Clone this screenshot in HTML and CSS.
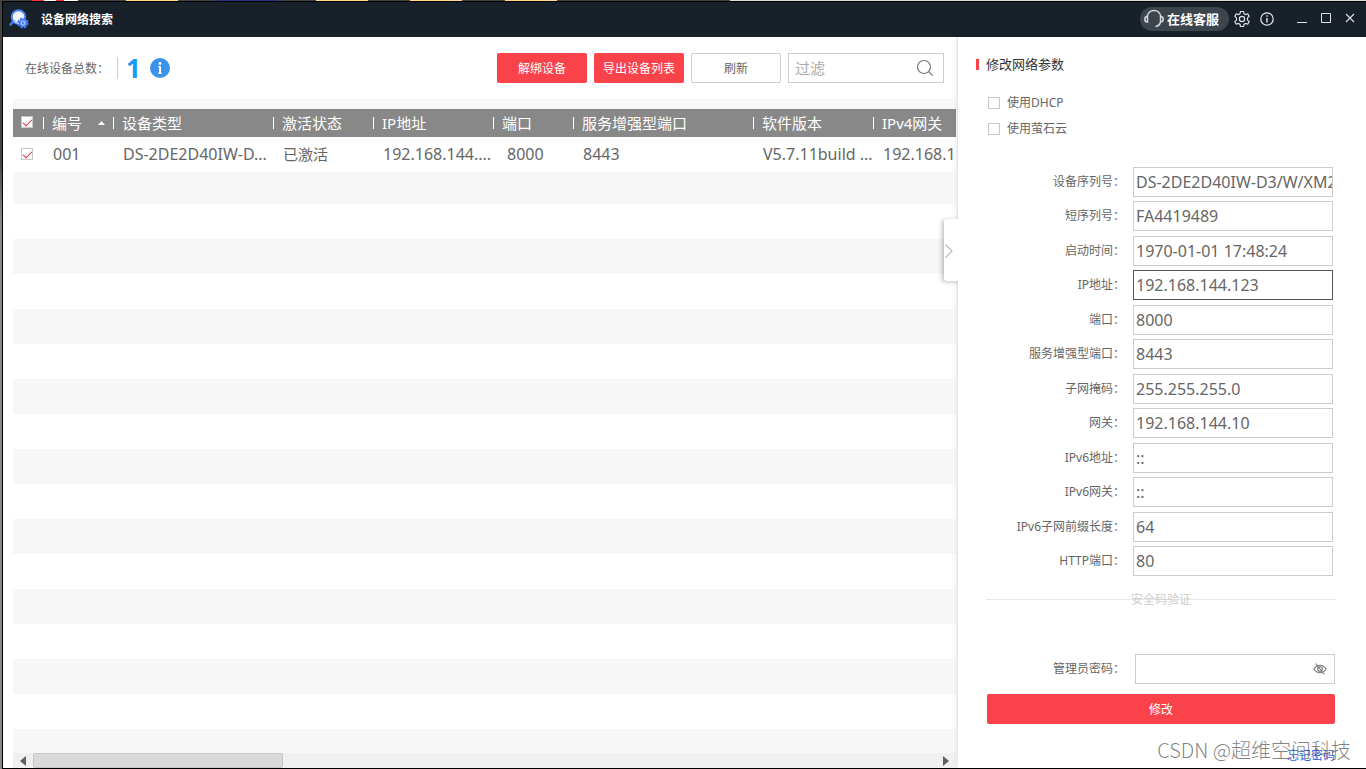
FILE: index.html
```html
<!DOCTYPE html>
<html lang="zh-CN">
<head>
<meta charset="utf-8">
<title>设备网络搜索</title>
<link rel="stylesheet" href="styles.css">
</head>
<body>
<div class="window">
  <header class="titlebar">
    <svg class="logo" width="20" height="20" viewBox="0 0 20 20">
      <path d="M4.500 12.500 1.500 15.500" stroke="#3f74e8" stroke-width="2.500" stroke-linecap="round"/>
      <circle cx="9.500" cy="8" r="6.800" fill="#f2f6ff" stroke="#4a80f0" stroke-width="2"/>
      <path d="M10 14a6 6 0 0 1-5-3" stroke="#b4ccff" stroke-width="2" fill="none"/>
      <circle cx="14" cy="14" r="4.600" fill="none" stroke="#3f74e8" stroke-width="2" stroke-dasharray="2.400 1.200"/>
      <circle cx="14" cy="14" r="4.200" fill="#4c82f2"/>
      <circle cx="14" cy="14" r="2" fill="#4c82f2" stroke="#b9d0ff" stroke-width="1"/>
    </svg>
    <h1 class="app-title">设备网络搜索</h1>
    <button class="service" type="button">
      <svg width="20" height="20" viewBox="0 0 20 20" fill="none" stroke="#d5d8da" stroke-width="1.500">
        <path d="M3 7.500C4 4 6.500 1.500 10 1.500S16 4 17 7.500"/>
        <path d="M3.500 7.500C1.500 7.500.8 8.800.8 10.200s.7 2.800 2.700 2.800zM16.500 7.500c2 0 2.700 1.300 2.700 2.700S18.500 13 16.500 13zM16.500 13c-.5 2.500-2 4-5 4.500"/>
      </svg>
      <span>在线客服</span>
    </button>
    <button class="tool" type="button" aria-label="设置">
      <svg width="18" height="18" viewBox="0 0 18 18" fill="none" stroke="#dfe2e4" stroke-width="1.200" stroke-linejoin="round">
        <path d="M7.500 1.500h3l.5 2.200 1.500.9 2.200-.8 1.500 2.600-1.700 1.500v2.200l1.700 1.500-1.500 2.600-2.200-.8-1.500.9-.5 2.200h-3L7 14.300l-1.500-.9-2.200.8-1.500-2.600 1.700-1.500V7.900L1.800 6.400l1.500-2.600 2.200.8L7 3.700z"/>
        <circle cx="9" cy="9" r="2.600"/>
      </svg>
    </button>
    <button class="tool" type="button" aria-label="关于">
      <svg width="16" height="16" viewBox="0 0 16 16" fill="none" stroke="#e6e8e9" stroke-width="1.200">
        <circle cx="8" cy="8" r="6.200"/><path d="M8 7v4.500M8 4.300v1.400" stroke-width="1.400"/>
      </svg>
    </button>
    <button class="tool tool-min" type="button" aria-label="最小化">
      <svg width="12" height="12" viewBox="0 0 12 12"><path d="M1 9.500h10" stroke="#dfe2e4"/></svg>
    </button>
    <button class="tool" type="button" aria-label="最大化">
      <svg width="12" height="12" viewBox="0 0 12 12"><path d="M1.500.5h9v9h-9z" fill="none" stroke="#dfe2e4"/></svg>
    </button>
    <button class="tool" type="button" aria-label="关闭">
      <svg width="12" height="12" viewBox="0 0 12 12"><path d="M2 1l8 8M10 1l-8 8" stroke="#dfe2e4" stroke-width="1.100"/></svg>
    </button>
  </header>

  <div class="content">
    <main class="devices">
      <div class="toolbar">
        <span class="total-label">在线设备总数：</span>
        <span class="total">1</span>
        <svg class="info" width="20" height="20" viewBox="0 0 20 20">
          <circle cx="10" cy="10" r="10" fill="#3a92ea"/>
          <circle cx="10" cy="5.500" r="1.400" fill="#fff"/>
          <path d="M10 8.200v7.500" stroke="#fff" stroke-width="2"/>
          <path d="M8 8.700h2M8 15.300h4" stroke="#fff"/>
        </svg>
        <button class="btn btn-red" type="button">解绑设备</button>
        <button class="btn btn-red" type="button">导出设备列表</button>
        <button class="btn btn-plain" type="button">刷新</button>
        <div class="search">
          <input class="search-input" type="text" placeholder="过滤" aria-label="过滤">
          <svg width="18" height="18" viewBox="0 0 18 18" fill="none" stroke="#777" stroke-width="1.200">
            <circle cx="8" cy="8" r="6.500"/><path d="M12.700 12.700 16.500 16.500"/>
          </svg>
        </div>
      </div>

      <div class="grid">
        <table class="table">
          <colgroup>
            <col class="w30"><col class="w70"><col class="w160"><col class="w100"><col class="w120"><col class="w80"><col class="w180"><col class="w120"><col class="w120">
          </colgroup>
          <thead>
            <tr>
              <th><input class="check" type="checkbox" checked aria-label="全选"></th>
              <th><span class="sorted">编号<svg width="7" height="4" viewBox="0 0 7 4"><path d="M0 4 3.500 0 7 4z" fill="#fff"/></svg></span></th>
              <th>设备类型</th><th>激活状态</th><th>IP地址</th><th>端口</th><th>服务增强型端口</th><th>软件版本</th><th>IPv4网关</th>
            </tr>
          </thead>
          <tbody>
            <tr>
              <td><input class="check" type="checkbox" checked aria-label="选择 001"></td>
              <td>001</td><td>DS-2DE2D40IW-D...</td><td class="han">已激活</td><td>192.168.144....</td><td class="port">8000</td><td>8443</td><td>V5.7.11build ...</td><td>192.168.1...</td>
            </tr>
          </tbody>
        </table>
        <div class="first-stripe"></div>
        <div class="stripes"></div>
        <div class="scrollbar">
          <button class="arrow" type="button" aria-label="向左滚动"><svg width="6" height="10" viewBox="0 0 6 10"><path d="M6 0v10L0 5z" fill="#606060"/></svg></button>
          <div class="track"><div class="thumb"></div></div>
          <button class="arrow" type="button" aria-label="向右滚动"><svg width="6" height="10" viewBox="0 0 6 10"><path d="M0 0v10l6-5z" fill="#606060"/></svg></button>
        </div>
      </div>
    </main>

    <aside class="panel">
      <button class="collapse" type="button" aria-label="收起">
        <svg width="10" height="16" viewBox="0 0 10 16"><path d="M1.500 1.500 8 8l-6.500 6.500" fill="none" stroke="#bbb" stroke-width="1.200"/></svg>
      </button>
      <h2 class="panel-title">修改网络参数</h2>
      <label class="option"><input class="check" type="checkbox">使用DHCP</label>
      <label class="option"><input class="check" type="checkbox">使用萤石云</label>

      <form class="form">
        <div class="fields">
          <div class="field"><label for="f1">设备序列号：</label><input id="f1" type="text" value="DS-2DE2D40IW-D3/W/XM2"></div>
          <div class="field"><label for="f2">短序列号：</label><input id="f2" type="text" value="FA4419489"></div>
          <div class="field"><label for="f3">启动时间：</label><input id="f3" type="text" value="1970-01-01 17:48:24"></div>
          <div class="field"><label for="f4">IP地址：</label><input id="f4" class="active" type="text" value="192.168.144.123"></div>
          <div class="field"><label for="f5">端口：</label><input id="f5" type="text" value="8000"></div>
          <div class="field"><label for="f6">服务增强型端口：</label><input id="f6" type="text" value="8443"></div>
          <div class="field"><label for="f7">子网掩码：</label><input id="f7" type="text" value="255.255.255.0"></div>
          <div class="field"><label for="f8">网关：</label><input id="f8" type="text" value="192.168.144.10"></div>
          <div class="field"><label for="f9">IPv6地址：</label><input id="f9" type="text" value="::"></div>
          <div class="field"><label for="f10">IPv6网关：</label><input id="f10" type="text" value="::"></div>
          <div class="field"><label for="f11">IPv6子网前缀长度：</label><input id="f11" type="text" value="64"></div>
          <div class="field"><label for="f12">HTTP端口：</label><input id="f12" type="text" value="80"></div>
        </div>
        <div class="divider">安全码验证</div>
        <div class="password-row">
          <label for="pwd">管理员密码：</label>
          <div class="password">
            <input id="pwd" type="password">
            <button class="eye" type="button" aria-label="显示密码">
              <svg width="14" height="12" viewBox="0 0 14 12" fill="none" stroke="#777" stroke-width="1.100">
                <path d="M1 6c1.500-2.500 3.500-3.800 6-3.800S11.500 3.500 13 6c-1.500 2.500-3.500 3.800-6 3.800S2.500 8.500 1 6z"/><circle cx="7" cy="6" r="2.300"/><path d="M2.500.5l9 11"/>
              </svg>
            </button>
          </div>
        </div>
        <button class="btn-red submit" type="submit">修改</button>
      </form>
      <a class="forgot" href="#">忘记密码</a>
      <span class="credit">CSDN @超维空间科技</span>
    </aside>
  </div>
</div>
</body>
</html>
```
FILE: styles.css
```css
* { box-sizing: border-box; }

body {
  margin: 0;
  padding: 1px 0 0 2px;
  height: 100vh;
  overflow: hidden;
  font: 12px/16px "Noto Sans", "Noto Sans CJK SC", sans-serif;
  color: #666;
  background:
    linear-gradient(90deg, #444 32px, #f33 32px 44px, #fff 44px 56px, #f33 56px 64px, #fff 64px 78px, #444 78px 126px, #fd8 126px 178px, #444 178px 217px, #238 217px 277px, #444 277px 316px, #fd8 316px 368px, #444 368px 410px, #fd8 410px 462px, #444 462px 505px, #fd8 505px 557px, #444 557px 730px, #ddd 730px) top / 100% 1px no-repeat,
    linear-gradient(#444 160px, #8c8488 220px) #8c8488;
}

button, input { font: inherit; color: inherit; }
button { cursor: pointer; border: 0; padding: 0; background: none; }
svg { display: block; flex: none; }

.window {
  height: 100%;
  display: flex;
  flex-direction: column;
  border: 1px solid #000;
  border-right: 0;
  background: #fff;
}

.titlebar {
  flex: none;
  height: 35px;
  display: flex;
  align-items: center;
  padding: 0 4px 1px 6px;
  background: #18202a;
  color: #fff;
}
.app-title {
  flex: 1;
  margin: 0 0 0 12px;
  font: bold 12px/16px "Noto Sans CJK SC", sans-serif;
}
.service {
  height: 24px;
  width: 89px;
  display: flex;
  align-items: center;
  gap: 3px;
  padding-left: 4px;
  border-radius: 12px;
  background: #3c444c;
  font: bold 13px/16px "Noto Sans CJK SC", sans-serif;
}
.tool {
  width: 24px;
  height: 24px;
  margin-left: 1px;
  display: grid;
  place-items: center;
}
.tool-min { margin-left: 11px; }
.tool-min ~ .tool { margin-left: 0; }

.content { flex: 1; min-height: 0; display: flex; }

.devices {
  flex: 1;
  min-width: 0;
  display: flex;
  flex-direction: column;
  padding-left: 10px;
}
.toolbar {
  flex: none;
  height: 62px;
  display: flex;
  align-items: center;
  padding: 0 14px 0 12px;
}
.total-label { width: 92px; padding-top: 2px; }
.total {
  width: 33px;
  height: 22px;
  padding-left: 8px;
  border-left: 1px solid #ccc;
  font: bold 26px/22px "Noto Sans", sans-serif;
  color: #169af8;
}
.info { margin-right: auto; }
.btn {
  width: 90px;
  height: 30px;
  margin-right: 7px;
  border-radius: 2px;
}
.btn, .submit { padding-top: 2px; }
.btn-red { background: #f94249; color: #fff; }
.btn-plain { border: 1px solid #ccc; background: #fff; }
.search {
  width: 156px;
  height: 30px;
  display: flex;
  align-items: center;
  padding: 0 9px 0 6px;
  border: 1px solid #ccc;
}
.search-input {
  flex: 1;
  min-width: 0;
  padding: 0;
  border: 0;
  outline: 0;
  font-size: 15px;
}
.search-input::placeholder { color: #aaa; }

.grid {
  flex: 1;
  min-height: 0;
  display: flex;
  flex-direction: column;
  overflow: hidden;
  border-top: 10px solid #f7f7f7;
  margin-right: 2px;
}
.table { table-layout: fixed; width: 980px; border-collapse: collapse; flex: none; }
.w30 { width: 30px; }
.w70 { width: 70px; }
.w80 { width: 80px; }
.w100 { width: 100px; }
.w120 { width: 120px; }
.w160 { width: 160px; }
.w180 { width: 180px; }
.table th {
  height: 28px;
  padding: 0 0 0 9px;
  text-align: left;
  font: 15px/20px "Noto Sans", "Noto Sans CJK SC", sans-serif;
  color: #fff;
  background: linear-gradient(#fff, #fff) 0 8px / 1px 12px no-repeat #888;
}
.table th:first-child { background: #888; }
.table td {
  height: 35px;
  padding: 0 0 2px 10px;
  font-size: 16px;
  line-height: 20px;
  white-space: nowrap;
}
.table td.han { font-size: 15px; }
.table td.port { padding-left: 14px; }
.table th:first-child, .table td:first-child { padding: 0 0 2px 8px; }
.sorted { display: flex; align-items: center; justify-content: space-between; padding-right: 8px; }
.first-stripe { flex: none; height: 32px; background: #f7f7f7; }
.stripes {
  flex: 1;
  background: repeating-linear-gradient(#fff 0 35px, #f7f7f7 35px 70px);
}

.check {
  appearance: none;
  display: block;
  flex: none;
  width: 12px;
  height: 12px;
  margin: 0;
  border: 1px solid #c8c8c8;
  background: #fff;
}
.check:checked::after {
  content: "";
  display: block;
  width: 8px;
  height: 4px;
  margin: 2px 1px;
  border: solid #d9333f;
  border-width: 0 0 1px 1px;
  transform: rotate(-45deg);
}

.scrollbar { flex: none; height: 15px; display: flex; background: #f0f0f0; }
.arrow { width: 20px; display: grid; place-items: center; }
.track { flex: 1; }
.thumb {
  width: 250px;
  height: 15px;
  border: 1px solid #c6c6c6;
  border-radius: 2px;
  background: #d9d9d9;
}

.panel {
  position: relative;
  flex: none;
  width: 408px;
  padding: 17px 31px 0 29px;
  background: #fff;
  box-shadow: 0 0 4px rgba(0, 0, 0, .25);
}
.collapse {
  position: absolute;
  left: -14px;
  top: 182px;
  width: 16px;
  height: 62px;
  padding-top: 2px;
  border-radius: 3px 0 0 3px;
  background: #fff;
  box-shadow: -2px 1px 4px rgba(0, 0, 0, .25);
  clip-path: inset(-6px 2px -6px -6px);
}
.panel-title {
  display: flex;
  align-items: center;
  gap: 7px;
  margin: 0 0 19px -11px;
  font: 13px/20px "Noto Sans CJK SC", sans-serif;
  color: #333;
}
.panel-title::before { content: ""; width: 3px; height: 11px; background: #f94249; }
.option {
  display: flex;
  align-items: center;
  gap: 7px;
  height: 20px;
  margin: 0 0 6px 1px;
}
.fields {
  height: 409px;
  margin: 28px 2px 0 0;
  display: flex;
  flex-direction: column;
  justify-content: space-between;
}
.field, .password-row {
  display: flex;
  align-items: center;
  justify-content: flex-end;
  gap: 8px;
}
.password-row { gap: 10px; }
.field input {
  width: 200px;
  height: 30px;
  padding: 0 0 0 2px;
  border: 1px solid #ccc;
  outline: 0;
  font-size: 16px;
}
.field input.active { border-color: #555; }
.divider {
  height: 16px;
  margin: 16px -1px 46px;
  text-align: center;
  color: #ccc;
  background: linear-gradient(#e8e8e8, #e8e8e8) 0 7px / 100% 1px no-repeat;
}
.password {
  width: 200px;
  height: 30px;
  display: flex;
  align-items: center;
  border: 1px solid #ccc;
  padding-right: 7px;
}
.password input { flex: 1; min-width: 0; border: 0; outline: 0; }
.submit { display: block; width: 100%; height: 30px; margin-top: 10px; border-radius: 2px; }
.forgot {
  display: block;
  width: max-content;
  margin: 24px 0 0 auto;
  color: #2a62e0;
  text-decoration: none;
}
.credit {
  position: absolute;
  right: 15px;
  bottom: 5px;
  font: 300 20px/26px "Noto Sans CJK SC", sans-serif;
  color: rgba(90, 90, 90, .75);
  pointer-events: none;
}
```
